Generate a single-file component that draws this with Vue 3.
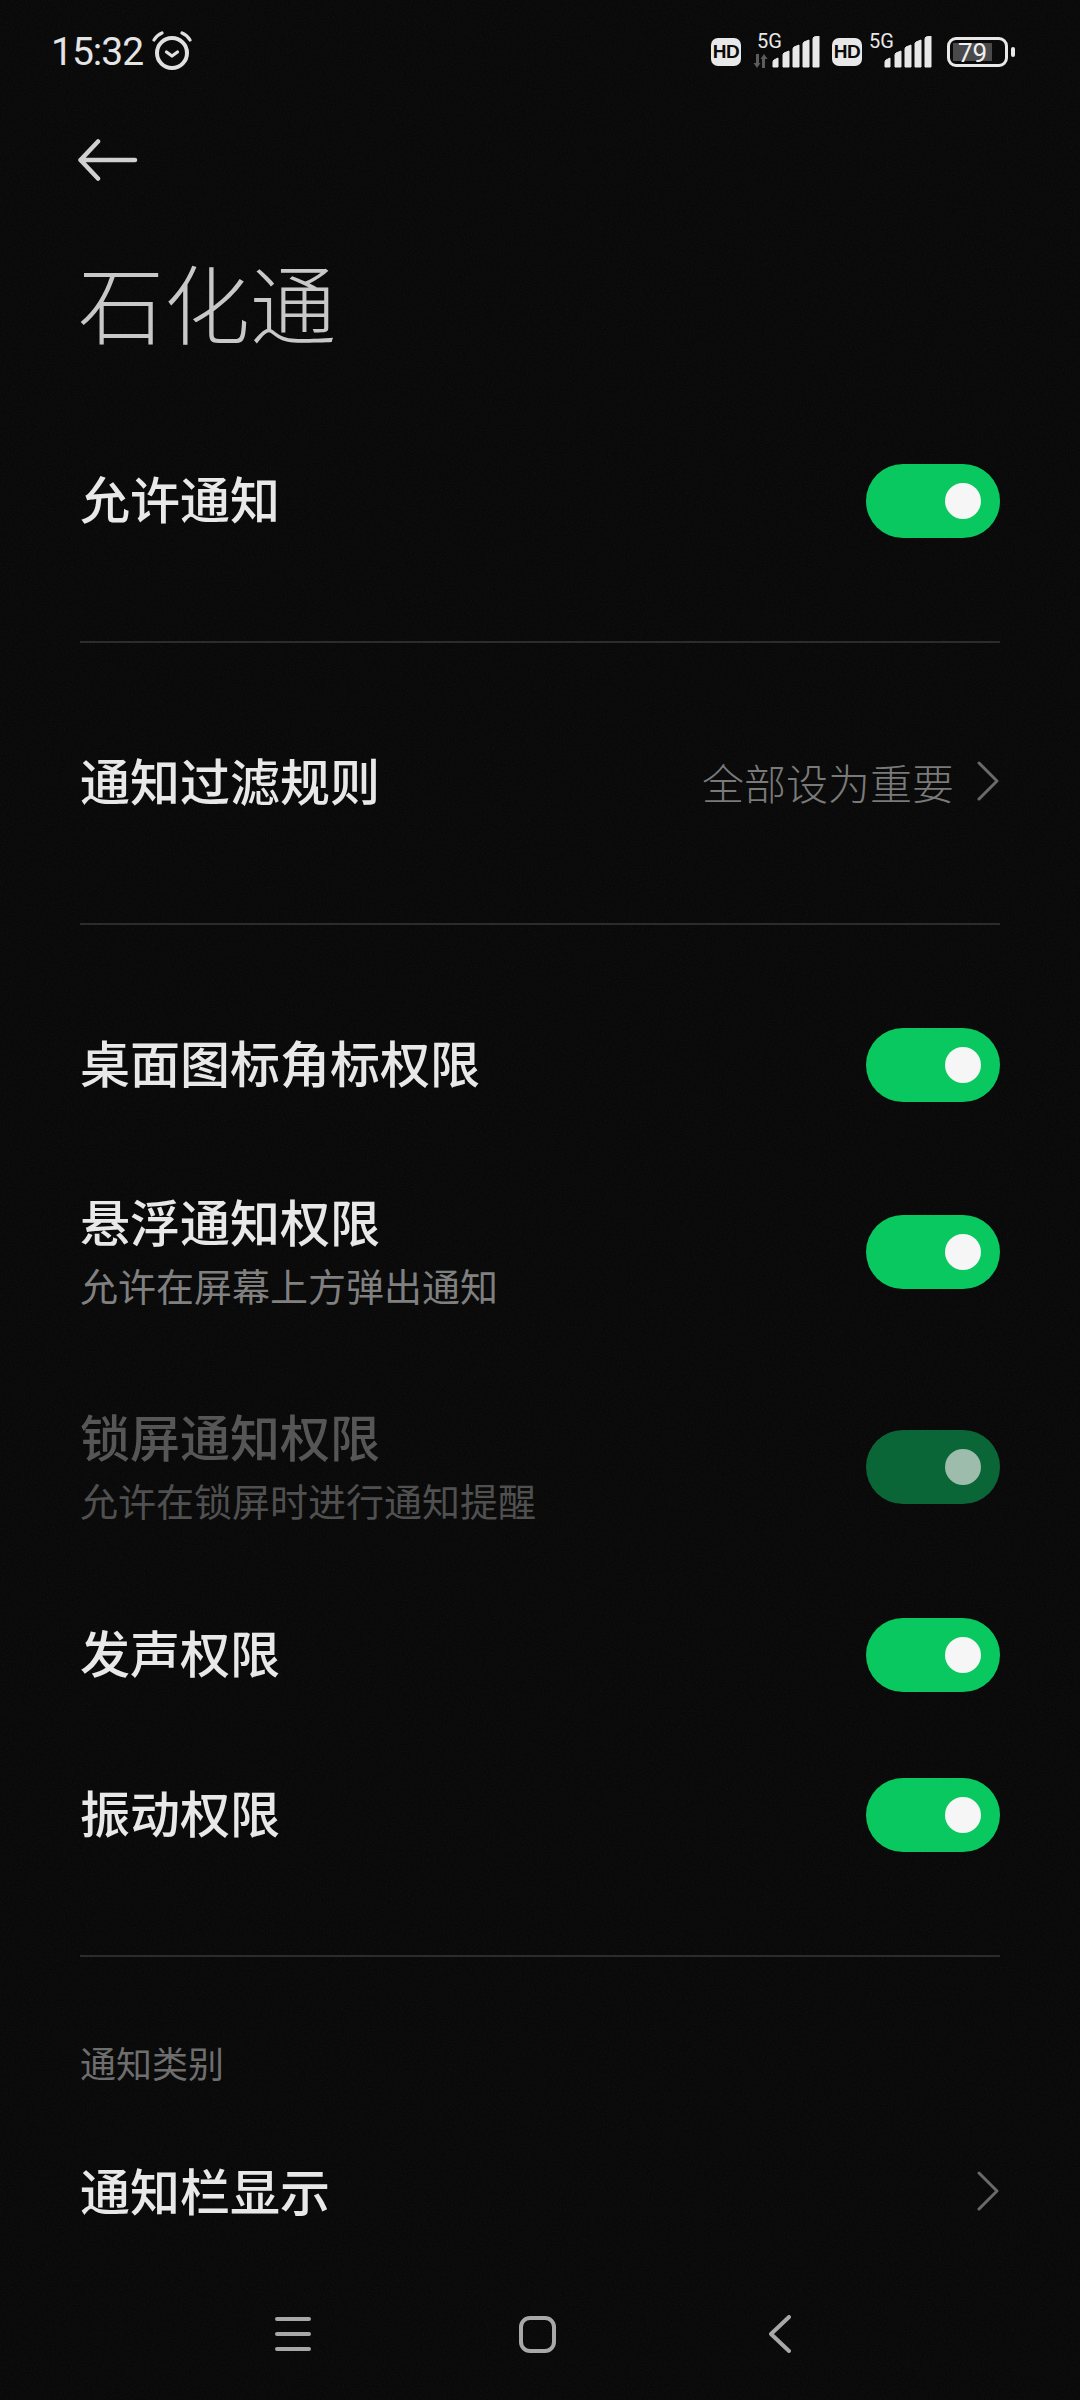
<script setup>
const mainRows = [
  { title: '桌面图标角标权限', height: 160 },
  { title: '悬浮通知权限', sub: '允许在屏幕上方弹出通知', height: 214 },
  { title: '锁屏通知权限', sub: '允许在锁屏时进行通知提醒', height: 216, off: true },
  { title: '发声权限', height: 160 },
  { title: '振动权限', height: 160 },
]
</script>

<template>
  <div class="page">
    <svg class="grain" width="1080" height="2400" aria-hidden="true">
      <filter id="n"><feTurbulence type="fractalNoise" baseFrequency="0.7" numOctaves="2" seed="4" /><feColorMatrix values="0 0 0 0 1  0 0 0 0 1  0 0 0 0 1  0.6 0 0 0 -0.22" /></filter>
      <rect width="1080" height="2400" filter="url(#n)" opacity="0.09" />
    </svg>

    <header class="status">
      <div class="status-left">
        <span class="time">15:32</span>
        <svg class="alarm" width="40" height="40" viewBox="0 0 40 40" fill="none" stroke="#e0e0e0" stroke-linecap="round" stroke-linejoin="round">
          <circle cx="20" cy="22" r="15" stroke-width="4" />
          <path d="M14.500 21 L20 25 L25.500 21" stroke-width="3.200" />
          <path d="M2 9 Q5 4 10 2 M30 2 Q35 4 38 9" stroke-width="3.200" />
        </svg>
      </div>
      <div class="status-right">
        <span class="hd">HD</span>
        <div class="sim sim-a">
          <span class="five">5G</span>
          <svg class="arrows" width="15" height="14" viewBox="0 0 15 14" fill="#5c5c5c"><path d="M3 0h3v9h1.500L4 14 0.500 9H3zM9 5h-1.500L11 0l3.500 5H12v9H9z" /></svg>
          <svg class="signal" width="48" height="32" viewBox="0 0 48 32" fill="#e8e8e8" stroke="#e8e8e8" stroke-width="1" stroke-linejoin="round">
            <path d="M1 31v-5q0-1 1-2l4-2v9zM11 31V19q0-1 1-2l5-2v16zM21 31V13q0-1 1-2l5-2v22zM31 31V8q0-1 1-2l5-2v27zM41 31V3q0-1 1-2l5-1v31z" />
          </svg>
        </div>
        <span class="hd hd-b">HD</span>
        <div class="sim sim-b">
          <span class="five">5G</span>
          <svg class="signal" width="48" height="32" viewBox="0 0 48 32" fill="#e8e8e8" stroke="#e8e8e8" stroke-width="1" stroke-linejoin="round">
            <path d="M1 31v-5q0-1 1-2l4-2v9zM11 31V19q0-1 1-2l5-2v16zM21 31V13q0-1 1-2l5-2v22zM31 31V8q0-1 1-2l5-2v27zM41 31V3q0-1 1-2l5-1v31z" />
          </svg>
        </div>
        <div class="battery">
          <div class="cell"><span class="level">79</span></div>
        </div>
        <span class="nub"></span>
      </div>
    </header>

    <div class="back">
      <svg width="60" height="42" viewBox="0 0 60 42" fill="none" stroke="#d0d0d0" stroke-width="4.500" stroke-linecap="round" stroke-linejoin="round">
        <path d="M20 2.500 L2.500 21 L20 39.500 M2.500 21 H57" />
      </svg>
    </div>

    <h1 class="title">石化通</h1>

    <section class="section first">
      <div class="row"><span class="label">允许通知</span><span class="toggle"><i></i></span></div>
    </section>

    <section class="section">
      <div class="row">
        <span class="label">通知过滤规则</span>
        <span class="value">全部设为重要
          <svg width="24" height="40" viewBox="0 0 24 40" fill="none" stroke="#6a6a6a" stroke-width="3" stroke-linecap="round" stroke-linejoin="round"><path d="M3 2 L21 20 L3 38" /></svg>
        </span>
      </div>
    </section>

    <section class="section">
      <div v-for="r in mainRows" :key="r.title" class="row" :class="{ off: r.off }" :style="{ height: r.height + 'px' }">
        <div class="texts">
          <span class="label">{{ r.title }}</span>
          <span v-if="r.sub" class="sub">{{ r.sub }}</span>
        </div>
        <span class="toggle"><i></i></span>
      </div>
    </section>

    <div class="group">通知类别</div>
    <div class="row tail">
      <span class="label">通知栏显示</span>
      <span class="value">
        <svg width="24" height="40" viewBox="0 0 24 40" fill="none" stroke="#6a6a6a" stroke-width="3" stroke-linecap="round" stroke-linejoin="round"><path d="M3 2 L21 20 L3 38" /></svg>
      </span>
    </div>

    <nav class="nav">
      <svg width="36" height="36" viewBox="0 0 36 36" fill="none" stroke="#a8a8a8" stroke-width="4" stroke-linecap="round"><path d="M2 3 H34 M2 18 H34 M2 33 H34" /></svg>
      <span class="home"></span>
      <svg width="22" height="38" viewBox="0 0 22 38" fill="none" stroke="#a8a8a8" stroke-width="4" stroke-linecap="round" stroke-linejoin="round"><path d="M20 2 L2 19 L20 36" /></svg>
    </nav>
  </div>
</template>

<style>
html, body { background: #090909; }
</style>

<style scoped>
.page {
  position: relative;
  width: 1080px;
  height: 2400px;
  overflow: hidden;
  background: #090909;
  color: #e8e8e8;
  font-family: "Noto Sans CJK SC", "Noto Sans", sans-serif;
}
.grain { position: absolute; inset: 0; pointer-events: none; }

.status {
  position: relative;
  height: 104px;
  padding: 0 65px 0 51px;
  display: flex;
  align-items: center;
  justify-content: space-between;
}
.status-left { display: flex; align-items: center; gap: 9px; }
.time {
  font: 400 39px/1 Roboto, sans-serif;
  letter-spacing: -1px;
  color: #e4e4e4;
}
.alarm { margin-top: -2px; }
.status-right { display: flex; align-items: center; }
.hd {
  width: 30px;
  height: 28px;
  border-radius: 7px;
  background: #e8e8e8;
  color: #0a0a0a;
  font: 700 19px/28px "Liberation Sans", sans-serif;
  text-align: center;
  letter-spacing: -0.5px;
}
.hd-b { margin-left: 12px; }
.sim { position: relative; height: 32px; display: flex; align-items: flex-end; }
.sim-a { margin-left: 12px; width: 67px; justify-content: flex-end; }
.sim-b { margin-left: 7px; width: 63px; justify-content: flex-end; }
.five {
  position: absolute;
  left: 4px;
  top: -5px;
  font: 400 20px/20px Roboto, sans-serif;
  color: #e8e8e8;
}
.sim-b .five { left: 0; }
.arrows { position: absolute; left: 0; bottom: 0; }
.battery {
  margin-left: 15px;
  width: 61px;
  height: 30px;
  box-sizing: border-box;
  border: 3px solid #e8e8e8;
  border-radius: 9px;
  padding: 3px;
}
.cell {
  width: 39px;
  height: 18px;
  background: #4a4a4a;
  text-align: center;
}
.level { font: 400 26px/18px Roboto, sans-serif; color: #f0f0f0; }
.nub {
  margin-left: 3px;
  width: 4px;
  height: 10px;
  border-radius: 2px;
  background: #e8e8e8;
}

.back {
  position: relative;
  height: 112px;
  padding-left: 78px;
  display: flex;
  align-items: center;
}
.title {
  position: relative;
  margin: 0;
  height: 205px;
  box-sizing: border-box;
  padding: 29px 0 0 78px;
  font-size: 86px;
  font-weight: 300;
  line-height: 112px;
  color: #c8c8c8;
}

.section {
  position: relative;
  margin: 0 80px;
  padding: 60px 0;
  border-bottom: 2px solid #2c2c2c;
}
.section.first { padding-top: 0; }
.row {
  position: relative;
  height: 160px;
  display: flex;
  align-items: center;
  justify-content: space-between;
}
.tail { margin: 0 80px; }
.texts { display: flex; flex-direction: column; }
.label {
  padding-bottom: 8px;
  font-size: 50px;
  font-weight: 500;
  line-height: 60px;
  color: #e8e8e8;
}
.sub {
  margin-top: 1px;
  padding-bottom: 3px;
  font-size: 38px;
  line-height: 52px;
  color: #808080;
}
.value {
  display: flex;
  align-items: center;
  gap: 22px;
  margin-bottom: 4px;
  font-size: 42px;
  font-weight: 300;
  color: #7a7a7a;
}
.toggle {
  position: relative;
  display: block;
  width: 134px;
  height: 74px;
  border-radius: 37px;
  background: #0ac860;
}
.toggle i {
  position: absolute;
  top: 19px;
  right: 19px;
  width: 36px;
  height: 36px;
  border-radius: 50%;
  background: #f6f6f6;
}
.off .label { color: #565656; }
.off .sub { color: #505050; }
.off .toggle { background: #0a6636; }
.off .toggle i { background: #9dbcab; }

.group {
  position: relative;
  padding: 80px 80px 0;
  height: 156px;
  box-sizing: border-box;
  font-size: 36px;
  line-height: 50px;
  font-weight: 400;
  color: #6e6e6e;
}
.nav {
  position: relative;
  height: 122px;
  padding: 0 289px 0 275px;
  display: flex;
  align-items: center;
  justify-content: space-between;
}
.home {
  display: block;
  margin-left: -6px;
  width: 37px;
  height: 37px;
  box-sizing: border-box;
  border: 4px solid #a8a8a8;
  border-radius: 11px;
}
</style>
